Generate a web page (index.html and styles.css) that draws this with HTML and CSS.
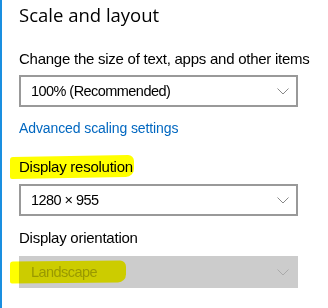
FILE: index.html
```html
<!DOCTYPE html>
<html lang="en">
<head>
    <meta charset="UTF-8">
    <title>Scale and layout</title>
    <link rel="stylesheet" href="styles.css">
</head>
<body>
    <div class="page">
        <h2 class="title">Scale and layout</h2>

        <p class="label label-first">Change the size of text, apps and other items</p>
        <div class="select">
            <span>100% (Recommended)</span>
            <svg class="chevron" width="12" height="7" viewBox="0 0 12 7"><polyline points="0.5,0.5 6,6 11.5,0.5" /></svg>
        </div>

        <a href="#" class="link">Advanced scaling settings</a>

        <p class="label label-res"><span class="mark mark-res">Display resolution</span></p>
        <div class="select select-res">
            <span>1280 × 955</span>
            <svg class="chevron" width="12" height="7" viewBox="0 0 12 7"><polyline points="0.5,0.5 6,6 11.5,0.5" /></svg>
        </div>

        <p class="label label-orient">Display orientation</p>
        <div class="select select-disabled">
            <span class="mark mark-land">Landscape</span>
            <svg class="chevron" width="12" height="7" viewBox="0 0 12 7"><polyline points="0.5,0.5 6,6 11.5,0.5" /></svg>
        </div>
    </div>
</body>
</html>
```

FILE: styles.css
```css
* {
    margin: 0;
    padding: 0;
    box-sizing: border-box;
}

body {
    font-family: 'Liberation Sans', Arial, sans-serif;
    background-color: #fff;
    color: #000;
    border-left: 2px solid #1a8fe0;
    min-height: 308px;
}

.page {
    display: flex;
    flex-direction: column;
    align-items: flex-start;
    padding: 1px 0 0 17px;
}

.title {
    font-family: 'Open Sans', sans-serif;
    font-size: 18.5px;
    font-weight: 400;
    line-height: 28px;
}

.label {
    font-size: 15px;
    line-height: 20px;
    letter-spacing: -0.25px;
}

.label-first {
    margin-top: 20px;
}

.select {
    width: 279px;
    height: 32px;
    margin-top: 6px;
    border: 2px solid #999;
    display: flex;
    align-items: center;
    justify-content: space-between;
    padding: 0 7px 0 10px;
    font-size: 14.5px;
    letter-spacing: -0.55px;
}

.chevron polyline {
    fill: none;
    stroke: #888;
    stroke-width: 1;
}

.link {
    margin-top: 11px;
    font-size: 14px;
    line-height: 20px;
    letter-spacing: -0.1px;
    color: #0067c0;
    text-decoration: none;
}

.label-res {
    margin-top: 19px;
}

.select-res {
    margin-top: 7px;
}

.label-orient {
    margin-top: 12px;
}

.select-disabled {
    margin-top: 8px;
    border-color: #ccc;
    background-color: #ccc;
    color: #999;
}

.select-disabled .chevron polyline {
    stroke: #aaa;
}

/* marker highlights drawn over the text */
.mark {
    position: relative;
}

.mark::before {
    content: '';
    position: absolute;
    background-color: #ffff00;
    mix-blend-mode: multiply;
    border-radius: 3px 6px 8px 2px;
}

.mark-res::before {
    left: -9px;
    right: -1px;
    top: -2px;
    bottom: -3px;
    transform: skewY(-1deg);
}

.mark-land::before {
    left: -21px;
    right: -29px;
    top: -3px;
    bottom: -3px;
    transform: skewY(-0.6deg);
}
```
